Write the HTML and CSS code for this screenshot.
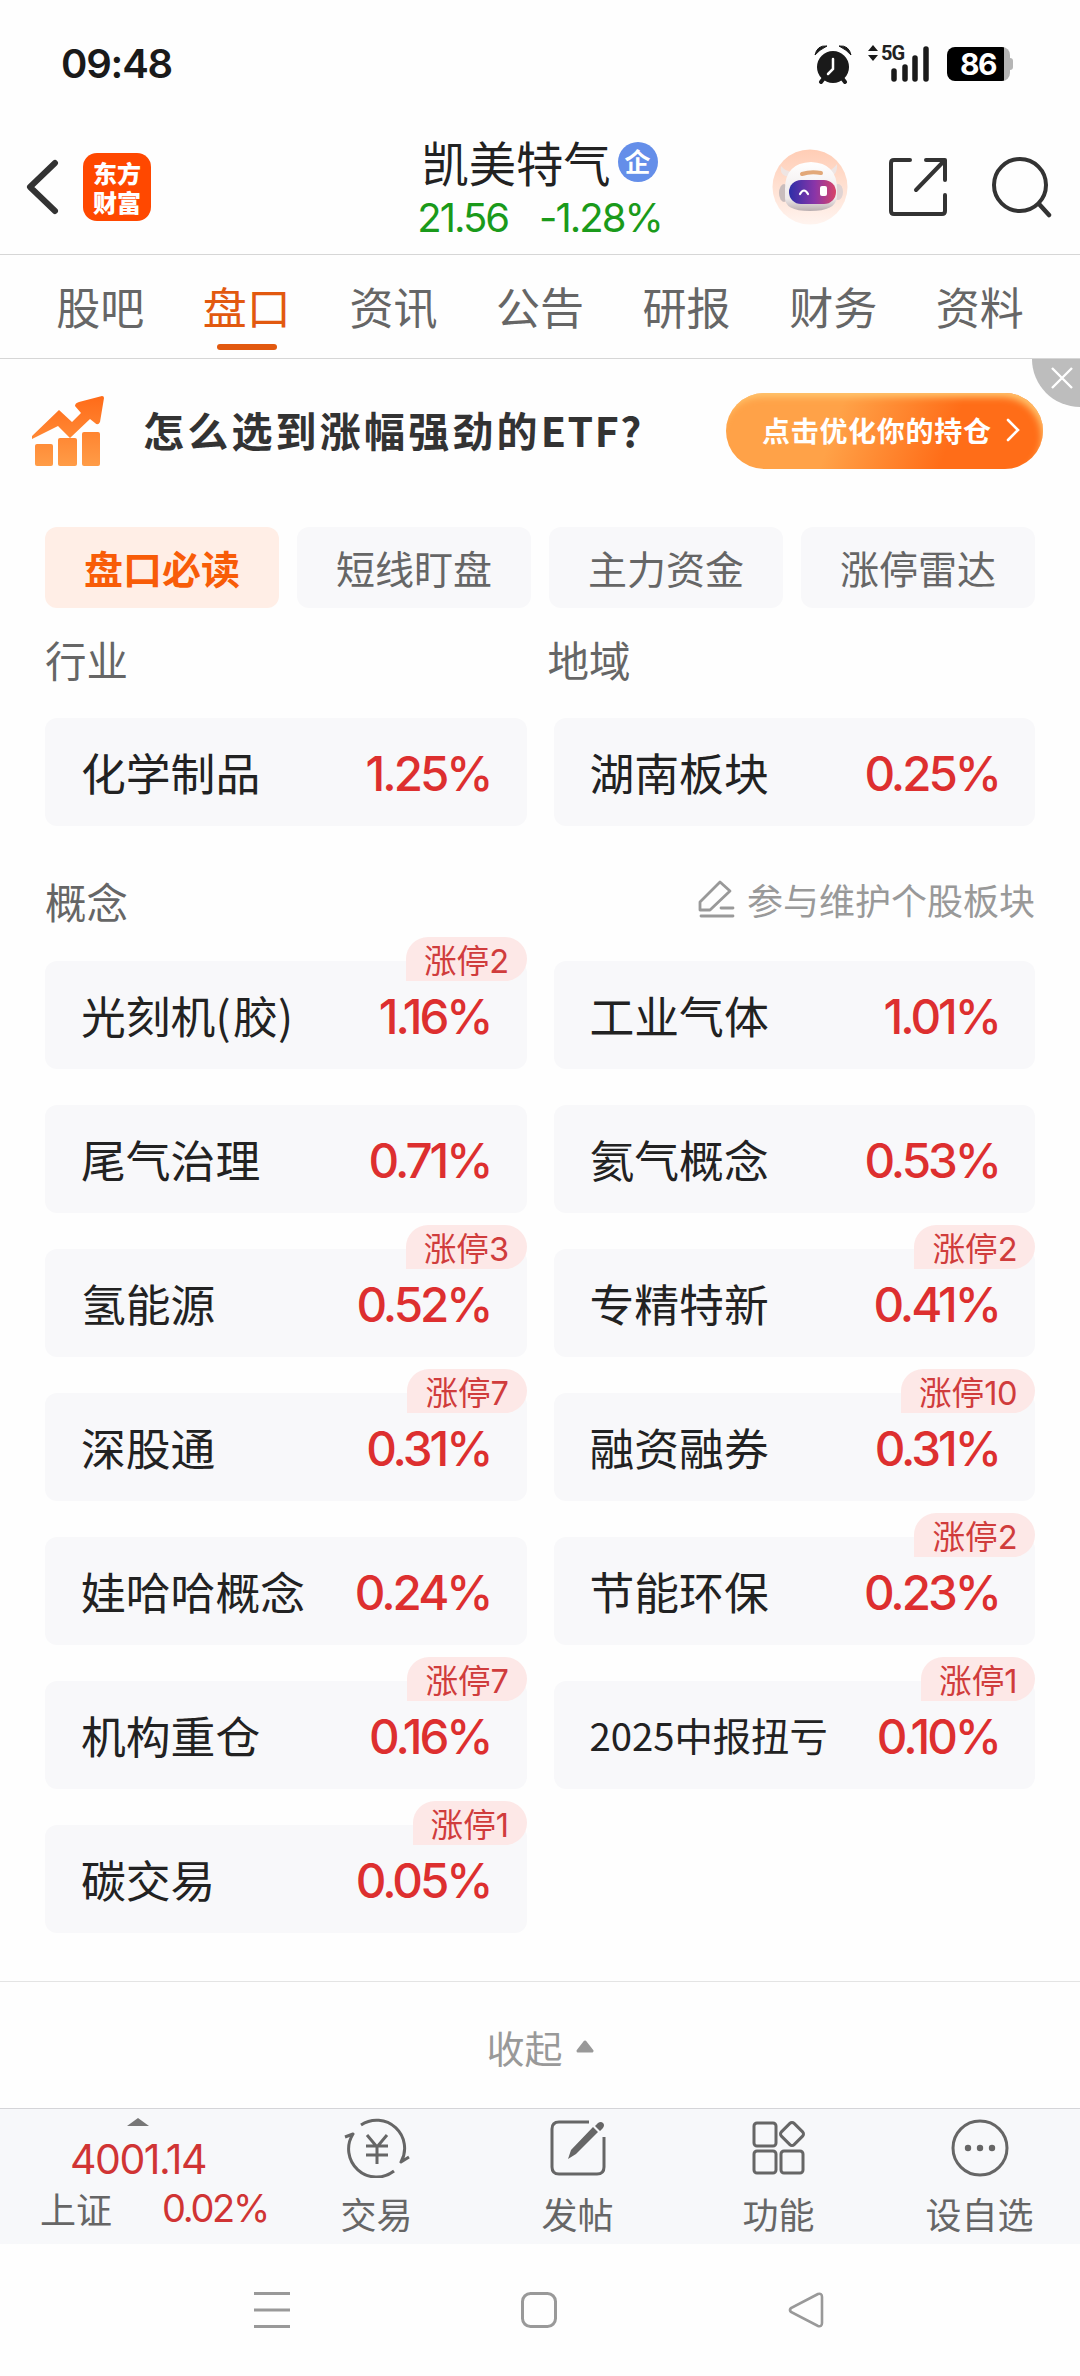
FILE: index.html
```html
<!DOCTYPE html>
<html lang="zh-CN">
<head>
  <meta charset="UTF-8" />
  <meta name="viewport" content="width=device-width, initial-scale=1.0"/>
  <title>凯美特气 - 盘口</title>
  <link rel="stylesheet" href="styles.css">
</head>

<body>
  <!-- Status Bar -->
  <div class="status-bar">
    <div class="clock">09:48</div>
    <div class="status-icons">
      <svg class="alarm" width="38" height="39" viewBox="0 0 38 39">
        <circle cx="19" cy="22" r="16" fill="#1a1a1a"/>
        <path d="M1 10Q3 0 13 1Q5 5 1 10zM37 10Q35 0 25 1Q33 5 37 10z" fill="#1a1a1a" stroke="#1a1a1a" stroke-width="1"/>
        <path d="M10 33l-3 4M28 33l3 4" stroke="#1a1a1a" stroke-width="4" stroke-linecap="round"/>
        <path d="M19 14v10l-5 5" fill="none" stroke="#fff" stroke-width="2.5" stroke-linecap="round"/>
      </svg>
      <div class="signal">
        <svg width="64" height="38" viewBox="0 0 64 38">
          <path d="M1 6L6 0l5 6zM1 10h10l-5 6z" fill="#1a1a1a"/>
          <path d="M27 26v8M38 22v12M48 13v21M59 4v30" stroke="#1a1a1a" stroke-width="5.5" stroke-linecap="round"/>
        </svg>
        <span class="network">5G</span>
      </div>
      <div class="battery"><span>86</span></div>
    </div>
  </div>

  <!-- Header -->
  <header class="header">
    <div class="header-left">
      <svg width="33" height="56" viewBox="0 0 33 56">
        <path d="M29 4L4 28l25 24" fill="none" stroke="#333" stroke-width="6" stroke-linecap="round" stroke-linejoin="round"/>
      </svg>
      <div class="logo"><span>东方</span><span>财富</span></div>
    </div>
    <div class="stock">
      <div class="stock-name">凯美特气<span class="company-tag">企</span></div>
      <div class="stock-price"><span>21.56</span><span>-1.28%</span></div>
    </div>
    <div class="header-right">
      <svg class="robot" width="76" height="76" viewBox="0 0 76 76">
        <defs>
          <linearGradient id="robotBg" x1="0" y1="0" x2="0" y2="1">
            <stop offset="0" stop-color="#ffcdb5"/>
            <stop offset="1" stop-color="#fff4ef"/>
          </linearGradient>
          <linearGradient id="robotFace" x1="0" y1="0" x2="1" y2="0">
            <stop offset="0" stop-color="#2d2fa8"/>
            <stop offset=".55" stop-color="#8a35a8"/>
            <stop offset="1" stop-color="#d84468"/>
          </linearGradient>
          <linearGradient id="robotHead" x1="0" y1="0" x2="0" y2="1">
            <stop offset="0" stop-color="#fff"/>
            <stop offset=".75" stop-color="#eee9e9"/>
            <stop offset="1" stop-color="#b9aeb0"/>
          </linearGradient>
        </defs>
        <circle cx="38" cy="38" r="37.5" fill="url(#robotBg)"/>
        <path d="M18 28Q7 27 9 17q5 6 13 6zM56 28q10-1 9-13-5 7-12 8z" fill="#efe5e3"/>
        <ellipse cx="12" cy="44" rx="5" ry="9" fill="#c9bdbd"/>
        <ellipse cx="66" cy="43" rx="5" ry="8" fill="#dfd3d3"/>
        <path d="M13 40q0-26 26-27 26 1 26 27v8q-1 14-27 14T13 48z" fill="url(#robotHead)"/>
        <path d="M30 25q9-3 19-1" fill="none" stroke="#e2a878" stroke-width="4" stroke-linecap="round"/>
        <rect x="17" y="31" width="47" height="24" rx="12" fill="url(#robotFace)"/>
        <path d="M28 45q4-7 8 0" fill="none" stroke="#fff" stroke-width="2.2" stroke-linecap="round"/>
        <rect x="48" y="37" width="7" height="10" rx="2" fill="#fff"/>
      </svg>
      <svg class="share" width="60" height="60" viewBox="0 0 60 60">
        <path d="M22 3H6Q3 3 3 6v48q0 3 3 3h48q3 0 3-3V38M38 3h19v20M56 4L28 33" fill="none" stroke="#333" stroke-width="4" stroke-linecap="round" stroke-linejoin="round"/>
      </svg>
      <svg class="search" width="62" height="62" viewBox="0 0 62 62">
        <circle cx="29" cy="29" r="26" fill="none" stroke="#333" stroke-width="4"/>
        <path d="M48 48l10 11" stroke="#333" stroke-width="4.5" stroke-linecap="round"/>
      </svg>
    </div>
  </header>

  <!-- Tabs -->
  <nav class="tabs">
    <a class="tab">股吧</a>
    <a class="tab active">盘口</a>
    <a class="tab">资讯</a>
    <a class="tab">公告</a>
    <a class="tab">研报</a>
    <a class="tab">财务</a>
    <a class="tab">资料</a>
  </nav>

  <!-- Banner -->
  <div class="banner">
    <svg class="banner-icon" width="74" height="72" viewBox="0 0 74 72">
      <defs>
        <linearGradient id="chart" gradientUnits="userSpaceOnUse" x1="0" y1="0" x2="0" y2="72">
          <stop offset="0" stop-color="#ff6a18"/>
          <stop offset="1" stop-color="#ff9d48"/>
        </linearGradient>
      </defs>
      <path d="M1 41L28 15l13 12 9-9-6-7q0-3 4-4L71 1q2 0 2 2l-4 24q-2 4-5 1l-5-4-20 19-12-12L1 44z" fill="url(#chart)"/>
      <rect x="4" y="49" width="18" height="22" rx="2" fill="url(#chart)"/>
      <rect x="27" y="43" width="19" height="28" rx="2" fill="url(#chart)"/>
      <rect x="51" y="37" width="18" height="34" rx="2" fill="url(#chart)"/>
    </svg>
    <div class="banner-text">怎么选到涨幅强劲的<span>ETF?</span></div>
    <div class="banner-btn">
      点击优化你的持仓
      <svg width="14" height="24" viewBox="0 0 14 24">
        <path d="M2 2l10 10L2 22" fill="none" stroke="#fff" stroke-width="2.6" stroke-linecap="round"/>
      </svg>
    </div>
    <div class="banner-close">
      <svg width="22" height="22" viewBox="0 0 22 22">
        <path d="M1 1l20 20M21 1L1 21" stroke="#fff" stroke-width="2.4"/>
      </svg>
    </div>
  </div>

  <main class="content">
    <div class="pills">
      <div class="pill active">盘口必读</div>
      <div class="pill">短线盯盘</div>
      <div class="pill">主力资金</div>
      <div class="pill">涨停雷达</div>
    </div>

    <div class="section-titles">
      <span>行业</span>
      <span>地域</span>
    </div>
    <div class="card-grid">
      <div class="card"><span class="name">化学制品</span><span class="rate">1.25%</span></div>
      <div class="card"><span class="name">湖南板块</span><span class="rate">0.25%</span></div>
    </div>

    <div class="concept-title">
      <span>概念</span>
      <div class="edit">
        <svg width="37" height="38" viewBox="0 0 37 38">
          <path d="M2 30v-8L22 2l10 9L12 30zM23 28h12M3 36h32" fill="none" stroke="#999" stroke-width="2.8" stroke-linecap="round" stroke-linejoin="round"/>
        </svg>
        参与维护个股板块
      </div>
    </div>
    <div class="card-grid">
      <div class="card"><span class="name">光刻机<i>(</i>胶<i>)</i></span><span class="rate">1.16%</span><span class="limit">涨停<b>2</b></span></div>
      <div class="card"><span class="name">工业气体</span><span class="rate">1.01%</span></div>
      <div class="card"><span class="name">尾气治理</span><span class="rate">0.71%</span></div>
      <div class="card"><span class="name">氦气概念</span><span class="rate">0.53%</span></div>
      <div class="card"><span class="name">氢能源</span><span class="rate">0.52%</span><span class="limit">涨停<b>3</b></span></div>
      <div class="card"><span class="name">专精特新</span><span class="rate">0.41%</span><span class="limit">涨停<b>2</b></span></div>
      <div class="card"><span class="name">深股通</span><span class="rate">0.31%</span><span class="limit">涨停<b>7</b></span></div>
      <div class="card"><span class="name">融资融券</span><span class="rate">0.31%</span><span class="limit">涨停<b>10</b></span></div>
      <div class="card"><span class="name">娃哈哈概念</span><span class="rate">0.24%</span></div>
      <div class="card"><span class="name">节能环保</span><span class="rate">0.23%</span><span class="limit">涨停<b>2</b></span></div>
      <div class="card"><span class="name">机构重仓</span><span class="rate">0.16%</span><span class="limit">涨停<b>7</b></span></div>
      <div class="card"><span class="name small">2025中报扭亏</span><span class="rate">0.10%</span><span class="limit">涨停<b>1</b></span></div>
      <div class="card"><span class="name">碳交易</span><span class="rate">0.05%</span><span class="limit">涨停<b>1</b></span></div>
    </div>
  </main>

  <div class="fold">
    收起
    <svg width="18" height="13" viewBox="0 0 18 13">
      <path d="M9 2l7 9H2z" fill="#999" stroke="#999" stroke-width="3" stroke-linejoin="round"/>
    </svg>
  </div>

  <!-- Bottom Toolbar -->
  <div class="toolbar">
    <div class="index">
      <svg width="22" height="8" viewBox="0 0 22 8"><path d="M11 0l11 8H0z" fill="#777"/></svg>
      <div class="index-value">4001.14</div>
      <div class="index-row"><span>上证</span><span class="index-rate">0.02%</span></div>
    </div>
    <div class="tool">
      <svg width="66" height="60" viewBox="0 0 66 60" fill="none" stroke="#666" stroke-width="3">
        <path d="M17 7A28 28 0 0 1 57 44l8-5M50 53A28 28 0 0 1 9 16L1 19" stroke-linejoin="round"/>
        <path d="M23 17l10 12 10-12M22 28h22M22 37h22M33 28v18"/>
      </svg>
      交易
    </div>
    <div class="tool">
      <svg width="60" height="60" viewBox="0 0 60 60">
        <path d="M41 4H11Q4 4 4 11v38q0 7 7 7h38q7 0 7-7V19" fill="none" stroke="#666" stroke-width="3"/>
        <path d="M45 9l5 5-22 22-8 5 3-9zM47 8l3-3q3-2 5 0t0 5l-3 3z" fill="#666"/>
      </svg>
      发帖
    </div>
    <div class="tool">
      <svg width="60" height="60" viewBox="0 0 60 60" fill="none" stroke="#666" stroke-width="3">
        <rect x="5" y="5" width="22" height="23" rx="3"/>
        <rect x="5" y="33" width="22" height="22" rx="3"/>
        <rect x="32" y="33" width="22" height="22" rx="3"/>
        <rect x="34" y="7" width="18" height="18" rx="3" transform="rotate(45 43 16)"/>
      </svg>
      功能
    </div>
    <div class="tool">
      <svg width="60" height="60" viewBox="0 0 60 60">
        <circle cx="30" cy="30" r="27" fill="none" stroke="#666" stroke-width="3"/>
        <circle cx="18" cy="30" r="3.2" fill="#666"/>
        <circle cx="30" cy="30" r="3.2" fill="#666"/>
        <circle cx="42" cy="30" r="3.2" fill="#666"/>
      </svg>
      设自选
    </div>
  </div>

  <!-- System Navigation -->
  <div class="sys-nav">
    <svg width="38" height="38" viewBox="0 0 38 38"><path d="M1 2.5h36M1 19h36M1 35.5h36" stroke="#999" stroke-width="3"/></svg>
    <svg width="38" height="38" viewBox="0 0 38 38"><rect x="2.5" y="2.5" width="33" height="33" rx="8" fill="none" stroke="#999" stroke-width="3"/></svg>
    <svg width="38" height="38" viewBox="0 0 38 38"><path d="M31 3L4 17q-2 2 0 4l27 14q4 1 4-3V6q0-4-4-3z" fill="none" stroke="#999" stroke-width="2.6"/></svg>
  </div>
</body>
</html>
```
FILE: styles.css
```css
:root {
  --orange: #e2590f;
  --red: #dd2f2f;
  --green: #1a9a1a;
  --gray: #666;
  --card-bg: #f8f8fa;
}

* {
  box-sizing: border-box;
}

body {
  margin: 0;
  width: 1080px;
  background: #fefefe;
  color: #222;
  font-family: "Noto Sans CJK SC", sans-serif;
}

svg {
  display: block;
  flex: none;
}

.status-bar {
  height: 120px;
  padding: 8px 67px 0 61px;
  display: flex;
  align-items: center;
  justify-content: space-between;
}

.clock {
  font: 600 40px/48px Inter, sans-serif;
  letter-spacing: -1.2px;
  color: #1a1a1a;
}

.status-icons {
  display: flex;
  align-items: center;
}

.signal {
  position: relative;
  margin: 0 16px 0 15px;
}

.network {
  position: absolute;
  left: 14px;
  top: -2px;
  font: bold 20px/20px Roboto, sans-serif;
  letter-spacing: -1px;
}

.battery {
  position: relative;
  width: 63px;
  height: 34px;
  margin-right: 3px;
  border-radius: 8px;
  background: linear-gradient(to right, #000 57px, #b5b5b5 57px);
  padding-left: 13px;
  color: #fff;
  font: bold 30px/35px Inter, sans-serif;
  letter-spacing: -1.5px;
}

.battery::after {
  content: "";
  position: absolute;
  right: -3px;
  top: 11px;
  width: 3px;
  height: 12px;
  border-radius: 0 3px 3px 0;
  background: #b5b5b5;
}

.header {
  height: 135px;
  padding: 0 27px 0 26px;
  border-bottom: 1px solid #d6d6d6;
  display: flex;
  align-items: center;
  justify-content: space-between;
}

.header-left,
.header-right {
  width: 284px;
  display: flex;
  align-items: center;
}

.header-right {
  justify-content: flex-end;
}

.logo {
  width: 68px;
  height: 68px;
  margin-left: 24px;
  border-radius: 14px;
  background: #ff4800;
  color: #fff;
  display: flex;
  flex-direction: column;
  align-items: center;
  justify-content: center;
  font-size: 24px;
  font-weight: 900;
  line-height: 29px;
}

.share {
  margin: 0 43px 0 40px;
}

.stock-name {
  display: flex;
  align-items: center;
  justify-content: center;
  font-size: 47.3px;
  line-height: 56px;
}

.company-tag {
  width: 40px;
  height: 40px;
  margin-left: 7px;
  border-radius: 50%;
  background: #648ee9;
  color: #fff;
  font-size: 26px;
  font-weight: bold;
  line-height: 38px;
  text-align: center;
}

.stock-price {
  display: flex;
  justify-content: center;
  gap: 31px;
  margin-top: 6px;
  color: var(--green);
  font: 40px/44px Inter, sans-serif;
  letter-spacing: -2px;
}

.tabs {
  height: 104px;
  padding: 0 27px;
  border-bottom: 1px solid #d6d6d6;
  display: flex;
}

.tab {
  flex: 1;
  display: flex;
  flex-direction: column;
  align-items: center;
  padding-top: 21px;
  color: var(--gray);
  font-size: 44px;
  line-height: 60px;
}

.tab.active {
  color: var(--orange);
}

.tab.active::after {
  content: "";
  width: 60px;
  height: 6px;
  margin-top: 8px;
  border-radius: 3px;
  background: var(--orange);
}

.banner {
  position: relative;
  height: 144px;
  padding: 0 37px 0 31px;
  display: flex;
  align-items: center;
}

.banner-text {
  margin: -5px 0 0 38px;
  color: #333;
  font-size: 41px;
  font-weight: bold;
  letter-spacing: 3.2px;
  line-height: 60px;
}

.banner-text span {
  letter-spacing: 1.5px;
}

.banner-btn {
  width: 317px;
  height: 76px;
  margin-left: auto;
  padding: 0 23px 3px 36px;
  border-radius: 38px;
  background: linear-gradient(110deg, #ffa248 35%, #ff6d18 70%);
  box-shadow: inset -3px 6px 7px -2px #ffc56e;
  display: flex;
  align-items: center;
  justify-content: space-between;
  color: #fff;
  font-size: 28px;
  font-weight: bold;
  letter-spacing: .7px;
}

.banner-close {
  position: absolute;
  top: 0;
  right: 0;
  width: 48px;
  height: 48px;
  padding: 8px 0 0 19px;
  border-bottom-left-radius: 48px;
  background: #bdbdbd;
}

.content {
  padding: 24px 45px 48px;
}

.pills {
  display: grid;
  grid-template-columns: repeat(4, 1fr);
  gap: 18px;
}

.pill {
  height: 81px;
  border-radius: 12px;
  background: var(--card-bg);
  color: var(--gray);
  font-size: 39px;
  line-height: 81px;
  text-align: center;
}

.pill.active {
  background: #ffeee6;
  color: #f85c08;
  font-weight: bold;
}

.section-titles {
  display: grid;
  grid-template-columns: 1fr 1fr;
  column-gap: 15px;
  height: 110px;
  color: var(--gray);
  font-size: 41.5px;
  line-height: 102px;
}

.card-grid {
  display: grid;
  grid-template-columns: 1fr 1fr;
  gap: 36px 27px;
}

.card {
  position: relative;
  height: 108px;
  padding: 0 37px 0 36px;
  border-radius: 12px;
  background: var(--card-bg);
  display: flex;
  align-items: center;
  justify-content: space-between;
}

.name {
  margin-top: -1px;
  font-size: 44.8px;
  line-height: 60px;
}

.name i {
  font-style: normal;
  letter-spacing: 2.5px;
}

.name.small {
  font-size: 38.3px;
}

.rate {
  margin: 3px -1px 0 0;
  color: var(--red);
  font: 500 47.5px/60px Inter, sans-serif;
  letter-spacing: -3px;
}

/* limit-up count on the card corner */
.limit {
  position: absolute;
  top: -24px;
  right: 0;
  height: 44px;
  padding: 0 18px;
  border-radius: 22px 22px 22px 0;
  background: #fde8e7;
  color: #d03c3c;
  font-size: 32.6px;
  line-height: 43px;
}

.limit b {
  font-family: Inter, sans-serif;
  font-weight: 400;
  letter-spacing: -.5px;
}

.concept-title {
  height: 135px;
  padding-top: 15px;
  display: flex;
  align-items: center;
  justify-content: space-between;
  color: var(--gray);
  font-size: 41.5px;
}

.edit {
  display: flex;
  align-items: center;
  gap: 12px;
  color: #999;
  font-size: 36px;
  line-height: 50px;
  margin-top: -5px;
}

.fold {
  height: 127px;
  padding-top: 3px;
  border-top: 1px solid #e4e4e4;
  display: flex;
  align-items: center;
  justify-content: center;
  gap: 13px;
  color: #999;
  font-size: 38px;
}

.toolbar {
  height: 136px;
  border-top: 1px solid #d4d4d8;
  background: #f7f8fa;
  display: flex;
  color: var(--gray);
}

.index {
  width: 276px;
  padding-top: 9px;
  display: flex;
  flex-direction: column;
  align-items: center;
}

.index-value {
  margin-top: 8px;
  color: #d03434;
  font: 41px/50px Inter, sans-serif;
  letter-spacing: -1.5px;
}

.index-row {
  display: flex;
  align-items: center;
  gap: 50px;
  margin-left: 32px;
  font-size: 36px;
  line-height: 48px;
}

.index-rate {
  color: #d03434;
  font: 38px/48px Inter, sans-serif;
  letter-spacing: -2.3px;
}

.tool {
  flex: 1;
  padding-top: 9px;
  display: flex;
  flex-direction: column;
  align-items: center;
  font-size: 36px;
  line-height: 71px;
}

.sys-nav {
  height: 132px;
  padding: 0 255px 0 253px;
  display: flex;
  align-items: center;
  justify-content: space-between;
}
```
